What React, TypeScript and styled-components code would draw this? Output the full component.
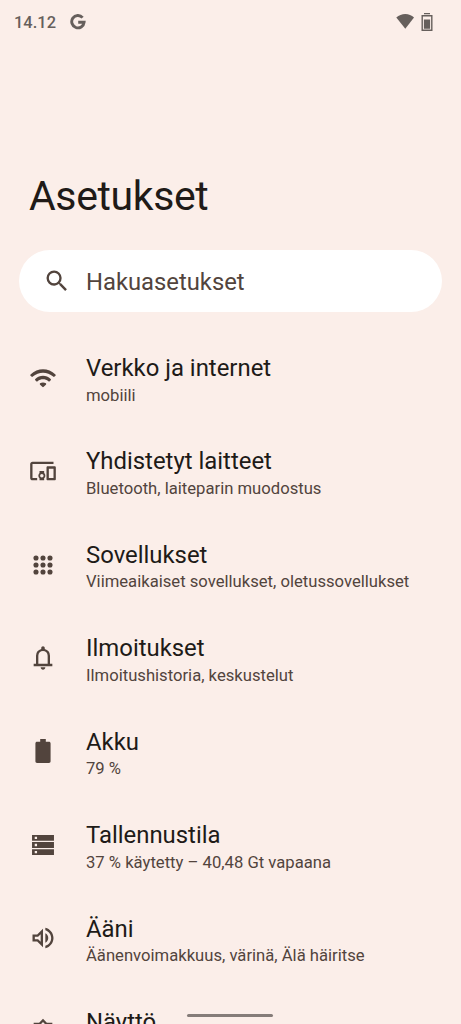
import React from 'react';
import styled, { createGlobalStyle } from 'styled-components';

const GlobalStyle = createGlobalStyle`
  * { box-sizing: border-box; }
  html, body { margin: 0; height: 100%; overflow: hidden; background: #fbeee9; }
  body { font-family: Roboto, sans-serif; }
`;

const Screen = styled.main`
  position: relative;
  display: flex;
  flex-direction: column;
  width: 461px;
  height: 1024px;
  overflow: hidden;
  background: #fbeee9;
  color: #201a17;
`;

const StatusBar = styled.header`
  display: flex;
  flex: none;
  align-items: center;
  height: 44px;
  padding: 0 28px 0 14px;
  color: #665f5c;
`;

const Clock = styled.time`
  width: 56px;
  font-size: 16.4px;
  font-weight: 500;
  letter-spacing: 0.05px;
`;

const StatusIcons = styled.div`
  display: flex;
  align-items: center;
  gap: 7px;
  margin-left: auto;
`;

const Title = styled.h1`
  flex: none;
  margin: 127px 0 0 29px;
  font-size: 41px;
  font-weight: 400;
  letter-spacing: -0.38px;
  line-height: 50px;
`;

const SearchBar = styled.div`
  display: flex;
  flex: none;
  align-items: center;
  height: 62px;
  margin: 29px 19px 0;
  padding-left: 24px;
  border-radius: 31px;
  background: #fff;
  color: #52443d;
  font-size: 23.8px;
`;

const SearchLabel = styled.span`
  margin-left: 15px;
  line-height: 28px;
  padding-top: 2px;
`;

const List = styled.ul`
  flex: none;
  margin: 19px 0 0;
  padding: 0;
  list-style: none;
`;

const Row = styled.li`
  display: flex;
  align-items: center;
  height: 93.45px;
  padding-left: 29px;
  color: #52443d;
`;

const RowText = styled.div`
  display: flex;
  flex-direction: column;
  gap: 3.7px;
  margin-left: 29px;
  padding-top: 4px;
  white-space: nowrap;
`;

const RowTitle = styled.span`
  color: #201a17;
  font-size: 23.9px;
  line-height: 28px;
`;

const RowSummary = styled.span`
  font-size: 16.65px;
  line-height: 20px;
`;

const NavHandle = styled.div`
  position: absolute;
  left: 187px;
  bottom: 7px;
  width: 86px;
  height: 3px;
  border-radius: 2px;
  background: #857c79;
`;

const Glyph = styled.svg`
  display: block;
  flex: none;
  fill: currentColor;
`;

const Icon = ({ d }: { d: string }) => (
  <Glyph width="28" height="28" viewBox="0 0 24 24" aria-hidden="true">
    <path fillRule="evenodd" d={d} />
  </Glyph>
);

const icons = {
  search:
    'M15.5 14h-.79l-.28-.27A6.47 6.47 0 0 0 16 9.5 6.5 6.5 0 1 0 9.5 16c1.61 0 3.09-.59 4.23-1.57l.27.28v.79l5 4.99L20.49 19zm-6 0a4.5 4.5 0 1 1 0-9 4.5 4.5 0 0 1 0 9z',
  wifi:
    'M1.3 8.9Q.8 9.5 1.3 10l.8.8q.6.5 1.2 0C8.2 6.4 15.8 6.4 20.7 10.8q.6.5 1.2 0l.8-.8q.5-.5 0-1.1C16.6 3 7.4 3 1.3 8.9zM5.4 12.8q-.6.6 0 1.2l.8.8q.6.5 1.2 0c2.7-2.2 6.5-2.2 9.2 0q.6.5 1.2 0l.8-.8q.6-.6 0-1.2c-3.8-3.5-9.4-3.5-13.2 0zM9.5 16.6q-.6.6 0 1.1l1.9 1.9q.6.5 1.2 0l1.9-1.9q.6-.5 0-1.1c-1.5-1.1-3.5-1.1-5 0z',
  devices:
    'M3 6h18V4H3c-1.1 0-2 .9-2 2v12c0 1.1.9 2 2 2h4v-2H3V6zm10 6H9v1.78c-.61.55-1 1.33-1 2.22s.39 1.67 1 2.22V20h4v-1.78c.61-.55 1-1.34 1-2.22s-.39-1.67-1-2.22V12zm-2 5.5a1.5 1.5 0 1 1 0-3 1.5 1.5 0 0 1 0 3zM22 8h-6c-.5 0-1 .5-1 1v10c0 .5.5 1 1 1h6c.5 0 1-.5 1-1V9c0-.5-.5-1-1-1zm-1 10h-4v-8h4v8z',
  apps: [6, 12, 18]
    .flatMap((y) => [6, 12, 18].map((x) => `M${x - 2.2} ${y}a2.2 2.2 0 1 0 4.4 0a2.2 2.2 0 1 0-4.4 0z`))
    .join(''),
  bell:
    'M4 19v-2h2v-7q0-2.075 1.25-3.687T10.5 4.2v-.7q0-.625.438-1.062T12 2t1.063.438T13.5 3.5v.7q2 .5 3.25 2.113T18 10v7h2v2zm8 3q-.825 0-1.412-.587T10 20h4q0 .825-.587 1.413T12 22m-4-5h8v-7q0-1.65-1.175-2.825T12 6 9.175 7.175 8 10z',
  battery:
    'M9.6 1.8h4.8v2.3h2.7c.8 0 1.4.6 1.4 1.4v15.3c0 .8-.6 1.4-1.4 1.4H6.9c-.8 0-1.4-.6-1.4-1.4V5.5c0-.8.6-1.4 1.4-1.4h2.7z',
  storage: [3.4, 9.5, 15.6].map((y) => `M2.6 ${y}h18.8v5H2.6zM4.9 ${y + 1.5}v2h2v-2z`).join(''),
  sound:
    'M3 9v6h4l5 5V4L7 9H3zm7-.17v6.34L7.83 13H5v-2h2.83L10 8.83zM16.5 12A4.5 4.5 0 0 0 14 7.97v8.05c1.48-.73 2.5-2.25 2.5-4.02zM14 3.23v2.06c2.89.86 5 3.54 5 6.71s-2.11 5.85-5 6.71v2.06c4.01-.91 7-4.49 7-8.77s-2.99-7.86-7-8.77z',
  display:
    'M20 8.69V4h-4.69L12 .69 8.69 4H4v4.69L.69 12 4 15.31V20h4.69L12 23.31 15.31 20H20v-4.69L23.31 12zM18 14.5V18h-3.5L12 20.5 9.5 18H6v-3.5L3.5 12 6 9.5V6h3.5L12 3.5 14.5 6H18v3.5l2.5 2.5z',
};

const settings: { icon: keyof typeof icons; title: string; summary: string }[] = [
  { icon: 'wifi', title: 'Verkko ja internet', summary: 'mobiili' },
  { icon: 'devices', title: 'Yhdistetyt laitteet', summary: 'Bluetooth, laiteparin muodostus' },
  { icon: 'apps', title: 'Sovellukset', summary: 'Viimeaikaiset sovellukset, oletussovellukset' },
  { icon: 'bell', title: 'Ilmoitukset', summary: 'Ilmoitushistoria, keskustelut' },
  { icon: 'battery', title: 'Akku', summary: '79 %' },
  { icon: 'storage', title: 'Tallennustila', summary: '37 % käytetty – 40,48 Gt vapaana' },
  { icon: 'sound', title: 'Ääni', summary: 'Äänenvoimakkuus, värinä, Älä häiritse' },
  { icon: 'display', title: 'Näyttö', summary: '' },
];

export default function App() {
  return (
    <Screen>
      <GlobalStyle />
      <StatusBar>
        <Clock>14.12</Clock>
        <Glyph width="16" height="16" viewBox="0 0 16 16" aria-hidden="true">
          <path
            d="M12.6 3.6A6.2 6.2 0 1 0 14.1 8.3H8.2"
            fill="none"
            stroke="currentColor"
            strokeWidth="2.9"
          />
        </Glyph>
        <StatusIcons>
          <Glyph width="18" height="16" viewBox="0 0 18 16" aria-hidden="true">
            <path d="M.3 3.5Q4.2 0 9.3 0T18 3.5L9.3 14.7z" />
          </Glyph>
          <Glyph width="12" height="19" viewBox="0 0 12 19" aria-hidden="true">
            <path fillRule="evenodd" d="M3 0h6v1.3H3zM.5 2h11v16H.5zM1.9 3.4v13.2h8.2V3.4zM2.9 6.5h6.2v9.2H2.9z" />
          </Glyph>
        </StatusIcons>
      </StatusBar>
      <Title>Asetukset</Title>
      <SearchBar>
        <Icon d={icons.search} />
        <SearchLabel>Hakuasetukset</SearchLabel>
      </SearchBar>
      <List>
        {settings.map(({ icon, title, summary }) => (
          <Row key={icon}>
            <Icon d={icons[icon]} />
            <RowText>
              <RowTitle>{title}</RowTitle>
              <RowSummary>{summary || '\u00a0'}</RowSummary>
            </RowText>
          </Row>
        ))}
      </List>
      <NavHandle />
    </Screen>
  );
}
